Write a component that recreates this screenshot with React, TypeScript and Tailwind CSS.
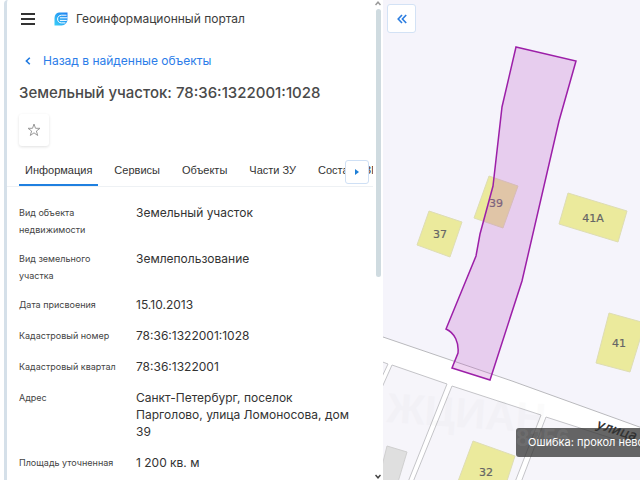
import React, { useState } from 'react';

interface Field {
  label: string;
  value: string;
}

const fields: Field[] = [
  { label: 'Вид объекта недвижимости', value: 'Земельный участок' },
  { label: 'Вид земельного участка', value: 'Землепользование' },
  { label: 'Дата присвоения', value: '15.10.2013' },
  { label: 'Кадастровый номер', value: '78:36:1322001:1028' },
  { label: 'Кадастровый квартал', value: '78:36:1322001' },
  { label: 'Адрес', value: 'Санкт-Петербург, поселок Парголово, улица Ломоносова, дом 39' },
  { label: 'Площадь уточненная', value: '1 200 кв. м' },
];

const tabs = ['Информация', 'Сервисы', 'Объекты', 'Части ЗУ', 'Состав ЕЗП'];

const Logo = () => (
  <svg viewBox="0 0 14 14" className="h-[14px] w-[14px]" aria-hidden="true">
    <defs>
      <linearGradient id="logo" x1="0" y1="1" x2="1" y2="0">
        <stop offset="0" stopColor="#3ad0f8" />
        <stop offset="1" stopColor="#1c7cf0" />
      </linearGradient>
    </defs>
    <path d="M5 0.5H13.5V7C13.5 10.5 11 13.5 7.5 13.5H0.5V6C0.5 3 2.3 0.8 5 0.5Z" fill="url(#logo)" />
    <path
      d="M12.6 3.2H7.6C5.2 3.2 3.6 4.8 3.6 7C3.6 9.4 5 10.9 7.4 10.9H11.4M6 5.8H13.5M6 8.4H12.8"
      fill="none"
      stroke="#fff"
      strokeWidth="1"
    />
  </svg>
);

const Header = () => (
  <header className="flex h-[38px] items-center pl-[14px]">
    <button type="button" aria-label="Меню" className="flex w-[14px] flex-col gap-[3px]">
      <span className="h-[2px] bg-[#333]" />
      <span className="h-[2px] bg-[#333]" />
      <span className="h-[2px] bg-[#333]" />
    </button>
    <a href="#" className="ml-[19px] flex items-center gap-2 text-[12px] text-[#3c3c3c]">
      <Logo />
      Геоинформационный портал
    </a>
  </header>
);

const Tabs = () => {
  const [active, setActive] = useState(tabs[0]);

  return (
    <nav className="relative mt-2 border-b border-[#eef1f4] pl-3">
      <div className="flex gap-[10px] overflow-hidden font-['Liberation_Sans',sans-serif]">
        {tabs.map((tab) => (
          <button
            key={tab}
            type="button"
            onClick={() => setActive(tab)}
            className={`h-8 shrink-0 border-b-2 px-[6px] pt-[2px] text-[11px] text-[#333] ${tab === active ? 'border-[#1f80e0]' : 'border-transparent'}`}
          >
            {tab}
          </button>
        ))}
      </div>
      <button
        type="button"
        aria-label="Следующие вкладки"
        className="absolute right-1 top-[6px] flex h-6 w-6 items-center justify-center rounded-[3px] border border-[#cfe0f5] bg-white"
      >
        <svg viewBox="0 0 4 6" className="h-[6px] w-1">
          <path d="M0 0L4 3L0 6Z" fill="#1f7fd6" />
        </svg>
      </button>
    </nav>
  );
};

const ScrollRail = () => (
  <div className="flex w-[10px] shrink-0 flex-col items-center py-[1px]" aria-hidden="true">
    <svg viewBox="0 0 6 5" className="h-[5px] w-[6px]">
      <path d="M0.5 4L3 1.2L5.5 4" fill="none" stroke="#999" strokeWidth="1.5" />
    </svg>
    <div className="mt-[3px] h-[56%] w-[5px] rounded-[3px] bg-[#cfdbe0]" />
    <svg viewBox="0 0 6 5" className="mt-auto h-[5px] w-[6px]">
      <path d="M0.5 1L3 3.8L5.5 1" fill="none" stroke="#444" strokeWidth="1.5" />
    </svg>
  </div>
);

const ParcelMap = () => (
  <svg viewBox="383 0 257 480" preserveAspectRatio="xMinYMin slice" className="block h-full w-full">
    <rect x="383" y="0" width="257" height="480" fill="#f5f4fb" />
    <path d="M383 337L512 381L640 427V480H383Z" fill="#fff" />

    {/* plots on the far side of the street */}
    <g fill="#f6f5fa" stroke="#c4c4c8" strokeWidth="1">
      <path d="M380 361L388 364L380 381Z" />
      <path d="M392 365L447 384L408 482H340Z" />
      <path d="M452 386L541 415L515 482H413Z" />
      <path d="M546 417L645 449V485H520Z" />
    </g>
    <path d="M383 337L512 381L645 429" fill="none" stroke="#b9b9bd" strokeWidth="1" />

    <g fontFamily="Liberation Sans, sans-serif" fontWeight="700" fontSize="42" fill="#000" opacity="0.012">
      <text x="386" y="422" transform="rotate(4 386 422)">ЖЦИАН</text>
    </g>

    <path d="M387 446L407 452L398 482H378Z" fill="#dfdfdf" stroke="#cfcfcf" />
    <g fill="#ebea9c" stroke="#deddb4" strokeWidth="1">
      <path d="M429 211L462 222L450 257L417 245Z" />
      <path d="M489 176L518 186L503 228L474 218Z" />
      <path d="M568 193L627 211L618 242L559 224Z" />
      <path d="M609 313L645 323L630 372L596 363Z" />
      <path d="M473 441L515 456L506 484H457Z" />
    </g>

    <g fontFamily="DejaVu Sans, sans-serif" fontSize="11" fill="#666" stroke="#666" strokeWidth="0.2" textAnchor="middle">
      <text x="440" y="238">37</text>
      <text x="496" y="207">39</text>
      <text x="593" y="222">41А</text>
      <text x="619" y="347">41</text>
      <text x="486" y="476">32</text>
    </g>
    <text
      x="596"
      y="428"
      transform="rotate(18 596 428)"
      fontFamily="DejaVu Sans, sans-serif"
      fontSize="13"
      fontStyle="italic"
      fill="#222"
      stroke="#222"
      strokeWidth="0.3"
    >
      улица
    </text>

    <path
      d="M516 47L576 61L559 121L522 281L490 380L452 368L458 353C459 343 455 333 446 329L476 256L480 234L493 186L502 107Z"
      fill="#c157c6"
      fillOpacity="0.25"
      stroke="#9c1fa8"
      strokeWidth="1.5"
    />
  </svg>
);

export default function App() {
  const [starred, setStarred] = useState(false);

  return (
    <div className="flex h-screen overflow-hidden bg-white pl-1 font-['Inter','Noto_Sans',sans-serif] text-[#333]">
      <aside className="flex w-[59.6%] shrink-0 rounded-tl border-l-[3px] border-[#d5e0e9]">
        <div className="min-w-0 flex-1 overflow-hidden">
          <Header />

          <a href="#" className="ml-[18px] mt-[13px] flex h-5 items-center gap-3 text-[12px] text-[#2b7de9]">
            <svg viewBox="0 0 6 8" className="h-2 w-[6px]">
              <path d="M4.8 0.7L1.4 4L4.8 7.3" fill="none" stroke="#1f7ae0" strokeWidth="1.6" />
            </svg>
            Назад в найденные объекты
          </a>

          <h1 className="ml-3 mt-3 text-[15px] leading-5 font-medium text-[#4a4a4a]">
            Земельный участок: 78:36:1322001:1028
          </h1>

          <button
            type="button"
            aria-label="В избранное"
            aria-pressed={starred}
            onClick={() => setStarred(!starred)}
            className="ml-3 mt-[11px] flex h-8 w-[30px] items-center justify-center rounded-[3px] shadow-[0_1px_3px_rgba(0,0,0,0.12)]"
          >
            <svg viewBox="0 0 14 14" className="h-[14px] w-[14px]">
              <path
                d="M7 1L8.5 5.3H13L9.4 8L10.7 12.5L7 9.8L3.3 12.5L4.6 8L1 5.3H5.5Z"
                fill={starred ? '#999' : 'none'}
                stroke="#999"
              />
            </svg>
          </button>

          <Tabs />

          <dl className="ml-3 mr-4 mt-[17px] flex flex-col gap-3 leading-[17px]">
            {fields.map(({ label, value }) => (
              <div key={label} className="flex">
                <dt className="w-[117px] shrink-0 pr-5 text-[9px] leading-[17px] text-[#444]">{label}</dt>
                <dd className="pb-[2px] text-[12px]">{value}</dd>
              </div>
            ))}
          </dl>
        </div>
        <ScrollRail />
      </aside>

      <main className="relative min-w-0 flex-1 overflow-hidden">
        <ParcelMap />
        <button
          type="button"
          aria-label="Свернуть панель"
          className="absolute left-1 top-1 flex h-[29px] w-[29px] items-center justify-center rounded-[3px] border border-[#d3e2f5] bg-white"
        >
          <svg viewBox="0 0 10 10" className="h-[10px] w-[10px]">
            <path d="M5 1L1.2 5L5 9M9.2 1L5.4 5L9.2 9" fill="none" stroke="#2b7de0" strokeWidth="1.6" />
          </svg>
        </button>
        <div
          role="alert"
          className="absolute bottom-[23px] left-[133px] flex h-[29px] items-center whitespace-nowrap rounded-[3px] bg-[#333]/75 px-3 text-[11px] text-white"
        >
          <span
            aria-hidden="true"
            className="absolute left-0 top-0 font-['Liberation_Sans',sans-serif] text-[24px] leading-[20px] font-bold text-white/8"
          >
            8256
          </span>
          Ошибка: прокол невозможен
        </div>
      </main>
    </div>
  );
}
